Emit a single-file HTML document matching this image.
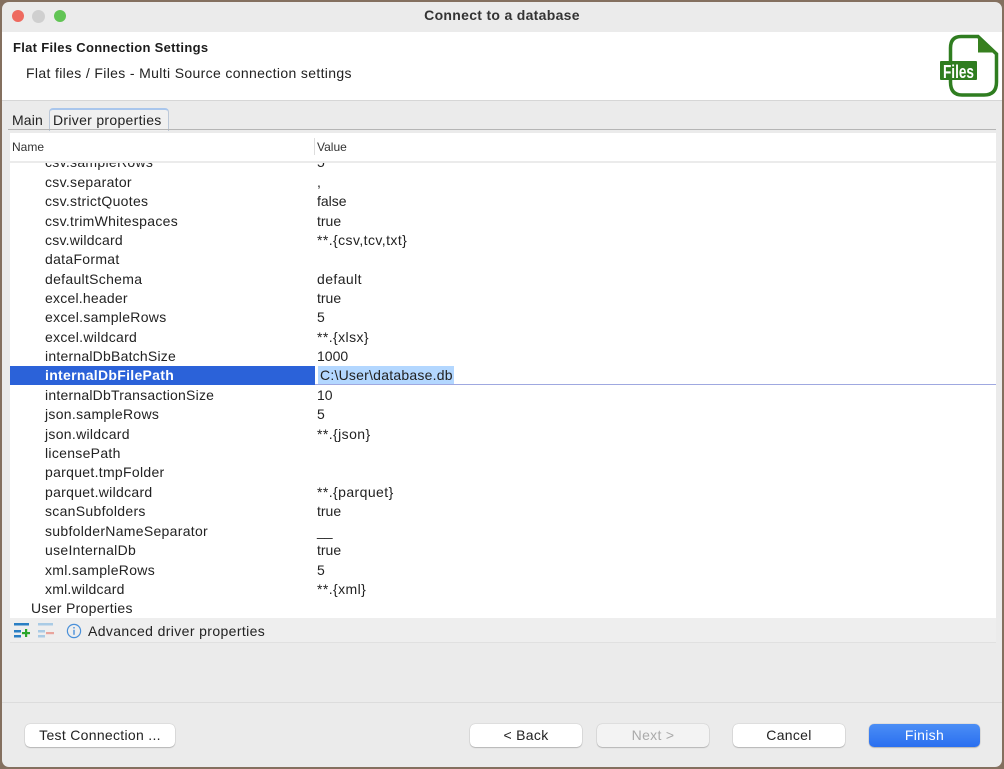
<!DOCTYPE html>
<html><head><meta charset="utf-8">
<style>
html,body{margin:0;padding:0;width:1004px;height:769px;overflow:hidden;background:#84705f;}
body{font-family:"Liberation Sans",sans-serif;font-size:14px;color:#222;}
.a{position:absolute;white-space:nowrap;}
#win{position:absolute;left:2px;top:2px;width:1000px;height:765px;background:#ebebeb;border-radius:7px;overflow:hidden;}
.n,.v{position:absolute;white-space:nowrap;height:19px;line-height:19px;}
.n{left:45px;letter-spacing:.3px;}
.v{left:317px;}
.w{letter-spacing:.42px;}
.t{letter-spacing:.22px;}
.btn{position:absolute;top:724px;height:23px;line-height:23px;text-align:center;background:#fff;border-radius:5px;box-shadow:0 0 1px rgba(0,0,0,.35),0 1px 1px rgba(0,0,0,.18);font-size:14px;color:#222;letter-spacing:.3px;}
</style></head><body>
<div id="win"></div>
<!-- title bar -->
<div class="a" style="left:12px;top:10px;width:12px;height:12px;border-radius:50%;background:#ee6a5f"></div>
<div class="a" style="left:32px;top:10px;width:13px;height:13px;border-radius:50%;background:#cfcfcf"></div>
<div class="a" style="left:54px;top:10px;width:12px;height:12px;border-radius:50%;background:#61c454"></div>
<div class="a" style="left:0;width:1004px;top:8px;text-align:center;font-weight:bold;font-size:14px;line-height:15px;color:#333;letter-spacing:.3px;">Connect to a database</div>
<!-- header -->
<div class="a" style="left:2px;top:32px;width:1000px;height:68px;background:#fff;border-bottom:1px solid #d6d6d6"></div>
<div class="a" style="left:13px;top:40px;font-weight:bold;font-size:13px;line-height:15px;color:#1c1c1c;letter-spacing:.3px;">Flat Files Connection Settings</div>
<div class="a" style="left:26px;top:65px;font-size:14px;line-height:16px;color:#222;letter-spacing:.35px;">Flat files / Files - Multi Source connection settings</div>
<svg class="a" style="left:938px;top:32px" width="62" height="66" viewBox="0 0 62 66">
<path d="M23 4.500H40L58.500 22V50Q58.500 63 46 63H24Q12.500 63 12.500 50V16Q12.500 4.500 23 4.500Z" fill="#fff" stroke="#2f7d20" stroke-width="3.500"/>
<path d="M40 4.500L59 20.500H40Z" fill="#37801f"/>
<rect x="2" y="29" width="37" height="19" rx="1" fill="#2f7d20"/>
<text x="20.500" y="46" text-anchor="middle" font-family="Liberation Sans" font-weight="bold" font-size="18" fill="#fff" textLength="31" lengthAdjust="spacingAndGlyphs">Files</text>
</svg>
<!-- tabs -->
<div class="a" style="left:12px;top:111px;line-height:18px;font-size:14px;letter-spacing:.15px;">Main</div>
<div class="a" style="left:49px;top:108px;width:118px;height:21px;background:#f0f0f0;border:1px solid #bcc8d8;border-top:2px solid #a9c6ec;border-bottom:none;border-radius:4px 4px 0 0;box-sizing:content-box;"></div>
<div class="a" style="left:53px;top:111px;line-height:18px;font-size:14px;letter-spacing:.3px;">Driver properties</div>
<div class="a" style="left:8px;top:129px;width:988px;height:1px;background:#b5b5b5"></div>
<!-- table -->
<div class="a" style="left:10px;top:133px;width:986px;height:485px;background:#fff;overflow:hidden;">
 <div class="a" style="left:0;top:0;width:986px;height:28px;background:#fff;border-bottom:2px solid #ebebeb;z-index:3"></div>
 <div class="a" style="left:304px;top:5px;width:1px;height:17px;background:#ddd;z-index:4"></div>
 <div class="a" style="left:2px;top:6px;font-size:12px;line-height:16px;color:#333;z-index:4">Name</div>
 <div class="a" style="left:307px;top:6px;font-size:12px;line-height:16px;color:#333;z-index:4">Value</div>
</div>
<div class="a" style="left:0;top:0;width:1004px;height:769px;pointer-events:none;">
 <div class="n" style="top:153px;clip-path:inset(10px 0 0 0)">csv.sampleRows</div><div class="v" style="top:153px;clip-path:inset(10px 0 0 0)">5</div>
 <div class="n" style="top:173px">csv.separator</div><div class="v" style="top:173px">,</div>
 <div class="n" style="top:192px">csv.strictQuotes</div><div class="v" style="top:192px">false</div>
 <div class="n" style="top:212px">csv.trimWhitespaces</div><div class="v" style="top:212px">true</div>
 <div class="n t" style="top:231px">csv.wildcard</div><div class="v w" style="top:231px">**.{csv,tcv,txt}</div>
 <div class="n" style="top:250px">dataFormat</div>
 <div class="n" style="top:270px">defaultSchema</div><div class="v w" style="top:270px">default</div>
 <div class="n t" style="top:289px">excel.header</div><div class="v" style="top:289px">true</div>
 <div class="n" style="top:308px">excel.sampleRows</div><div class="v" style="top:308px">5</div>
 <div class="n" style="top:328px">excel.wildcard</div><div class="v w" style="top:328px">**.{xlsx}</div>
 <div class="n t" style="top:347px">internalDbBatchSize</div><div class="v" style="top:347px">1000</div>
 <div class="a" style="left:10px;top:366px;width:305px;height:19px;background:#2b62d9"></div>
 <div class="a" style="left:315px;top:384px;width:681px;height:1px;background:#9fa8e0"></div>
 <div class="a" style="left:318px;top:366px;width:136px;height:18px;background:#b3d7ff"></div>
 <div class="n" style="top:366px;color:#fff;font-weight:bold;letter-spacing:.3px">internalDbFilePath</div>
 <div class="v" style="top:366px;left:320px;letter-spacing:.23px">C:\User\database.db</div>
 <div class="n t" style="top:386px">internalDbTransactionSize</div><div class="v" style="top:386px">10</div>
 <div class="n" style="top:405px">json.sampleRows</div><div class="v" style="top:405px">5</div>
 <div class="n" style="top:425px">json.wildcard</div><div class="v w" style="top:425px">**.{json}</div>
 <div class="n" style="top:444px">licensePath</div>
 <div class="n" style="top:463px">parquet.tmpFolder</div>
 <div class="n" style="top:483px">parquet.wildcard</div><div class="v w" style="top:483px">**.{parquet}</div>
 <div class="n" style="top:502px">scanSubfolders</div><div class="v" style="top:502px">true</div>
 <div class="n" style="top:522px">subfolderNameSeparator</div><div class="v" style="top:522px">__</div>
 <div class="n" style="top:541px">useInternalDb</div><div class="v" style="top:541px">true</div>
 <div class="n" style="top:561px">xml.sampleRows</div><div class="v" style="top:561px">5</div>
 <div class="n t" style="top:580px">xml.wildcard</div><div class="v w" style="top:580px">**.{xml}</div>
 <div class="n" style="top:599px;left:31px;letter-spacing:.3px">User Properties</div>
</div>
<!-- toolbar -->
<div class="a" style="left:10px;top:618px;width:986px;height:25px;background:#eeeeee;border-bottom:1px solid #e0e0e0;box-sizing:border-box"></div>
<svg class="a" style="left:13px;top:622px" width="44" height="16" viewBox="0 0 44 16">
<rect x="1" y="1" width="15" height="2.500" fill="#2a7fc4"/><rect x="1" y="8" width="7" height="2.500" fill="#2a7fc4"/><rect x="1" y="13" width="7" height="2.500" fill="#2a7fc4"/>
<rect x="9" y="10" width="8" height="2.200" fill="#2aa52a"/><rect x="12" y="7" width="2.200" height="8" fill="#2aa52a"/>
<rect x="25" y="1" width="15" height="2.500" fill="#a9cbe5"/><rect x="25" y="8" width="7" height="2.500" fill="#a9cbe5"/><rect x="25" y="13" width="7" height="2.500" fill="#a9cbe5"/>
<rect x="33" y="10" width="8" height="2.200" fill="#e8a49c"/>
</svg>
<svg class="a" style="left:66px;top:623px" width="16" height="16" viewBox="0 0 16 16">
<circle cx="8" cy="8" r="6.600" fill="none" stroke="#4a90d9" stroke-width="1.200"/>
<rect x="7.300" y="6.800" width="1.400" height="5" fill="#4a90d9"/><rect x="7.300" y="4" width="1.400" height="1.500" fill="#4a90d9"/>
</svg>
<div class="a" style="left:88px;top:622px;line-height:18px;font-size:14px;letter-spacing:.38px;">Advanced driver properties</div>
<!-- footer -->
<div class="a" style="left:2px;top:702px;width:1000px;height:1px;background:#dcdcdc"></div>
<div class="btn" style="left:25px;width:150px;">Test Connection ...</div>
<div class="btn" style="left:470px;width:112px;">&lt; Back</div>
<div class="btn" style="left:597px;width:112px;background:#f3f3f3;color:#aaa;">Next &gt;</div>
<div class="btn" style="left:733px;width:112px;">Cancel</div>
<div class="btn" style="left:869px;width:111px;background:linear-gradient(#4b8ef5,#2a6ff0);color:#fff;">Finish</div>
</body></html>
